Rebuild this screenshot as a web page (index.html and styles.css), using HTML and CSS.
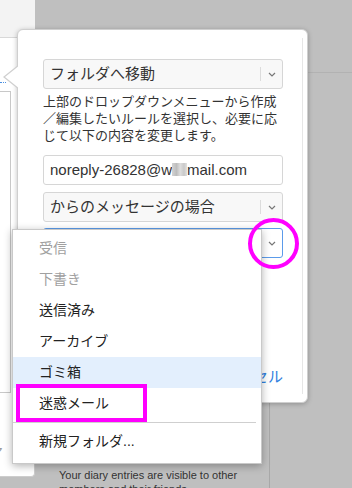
FILE: index.html
```html
<!DOCTYPE html>
<html lang="ja">
<head>
  <meta charset="UTF-8">
  <meta name="viewport" content="width=device-width, initial-scale=1.0">
  <title>フィルタ設定</title>
  <link rel="stylesheet" href="styles.css">
</head>
<body>
  <div class="page">
    <aside class="side">
      <div class="side-top"></div>
      <div class="side-card">
        <div class="side-dots"></div>
        <div class="side-box"></div>
        <div class="side-label">ア</div>
      </div>
    </aside>
    <main class="main">
      <div class="main-head"></div>
      <div class="main-body">
        <div class="diary">
          <div class="diary-line"></div>
          <p class="diary-note">Your diary entries are visible to other<br>members and their friends.</p>
        </div>
      </div>
    </main>
  </div>

  <div class="popup">
    <div class="popup-body">
      <div class="select">
        <span class="select-text">フォルダへ移動</span>
        <span class="select-arrow"><svg width="8" height="5" viewBox="0 0 8 5"><polyline points="1,1 4,4 7,1" fill="none" stroke="#777" stroke-width="1.2"/></svg></span>
      </div>
      <p class="hint">上部のドロップダウンメニューから作成<br>／編集したいルールを選択し、必要に応<br>じて以下の内容を変更します。</p>
      <div class="field">noreply-26828@w<span class="blur"></span>mail.com</div>
      <div class="select select-gap">
        <span class="select-text">からのメッセージの場合</span>
        <span class="select-arrow"><svg width="8" height="5" viewBox="0 0 8 5"><polyline points="1,1 4,4 7,1" fill="none" stroke="#777" stroke-width="1.2"/></svg></span>
      </div>
      <div class="select select-focus">
        <span class="select-text"></span>
        <span class="select-arrow"><svg width="8" height="5" viewBox="0 0 8 5"><polyline points="1,1 4,4 7,1" fill="none" stroke="#777" stroke-width="1.2"/></svg></span>
      </div>
      <div class="actions">
        <button class="btn-link">キャンセル</button>
      </div>
    </div>
  </div>

  <ul class="menu">
    <li class="menu-item is-disabled">受信</li>
    <li class="menu-item is-disabled">下書き</li>
    <li class="menu-item">送信済み</li>
    <li class="menu-item">アーカイブ</li>
    <li class="menu-item is-hover">ゴミ箱</li>
    <li class="menu-item">迷惑メール</li>
    <li class="menu-divider"></li>
    <li class="menu-item">新規フォルダ...</li>
  </ul>

  <div class="mark mark-circle"></div>
  <div class="mark mark-box"></div>
</body>
</html>
```

FILE: styles.css
```css
body {
  margin: 0;
  width: 352px;
  height: 488px;
  overflow: hidden;
  position: relative;
  background-color: #bfbfbf;
  font-family: "Liberation Sans", "Noto Sans CJK JP", sans-serif;
  color: #333;
}

/* underlying page */
.page {
  display: grid;
  grid-template-columns: 35px 1fr;
  height: 488px;
}
.side-top {
  height: 37px;
  background-color: #f3f3f3;
  border-bottom: 1px solid #d8d8d8;
}
.side-card {
  height: 439px;
  background: #fff;
  border-right: 1px solid #cdcdcd;
  border-bottom: 1px solid #cdcdcd;
  border-bottom-right-radius: 4px;
  box-sizing: border-box;
  overflow: hidden;
}
.side-dots {
  margin-top: 44px;
  width: 6px;
  border-top: 1px dotted #4a90e2;
}
.side-box {
  margin-top: 8px;
  margin-left: -1px;
  width: 12px;
  height: 302px;
  border: 1px solid #c8c8c8;
  box-sizing: border-box;
}
.side-label {
  margin-top: 52px;
  margin-left: -11px;
  font-size: 14px;
  line-height: 16px;
  color: #9a9a9a;
}
.main-head {
  height: 72px;
  border-bottom: 1px solid #b2b2b2;
}
.diary {
  width: 235px;
  height: 415px;
  border-right: 1px solid #a8a8a8;
  padding-top: 389px;
  box-sizing: border-box;
}
.diary-line {
  margin-left: 67px;
  width: 124px;
  height: 2px;
  background-color: #1c3d6e;
}
.diary-note {
  margin: 4px 0 0;
  padding-left: 24px;
  font-size: 11px;
  line-height: 14px;
  color: #333;
  white-space: nowrap;
}

/* popup */
.popup {
  position: absolute;
  left: 17px;
  top: 29px;
  width: 291px;
  height: 374px;
  box-sizing: border-box;
  background: #fff;
  border: 1px solid #cfcfcf;
  border-radius: 6px;
  box-shadow: 0 1px 5px rgba(0, 0, 0, 0.25);
  padding: 8px 4px 8px 0;
  z-index: 2;
}
.popup::before,
.popup::after {
  content: "";
  position: absolute;
  top: 35px;
  width: 0;
  height: 0;
  border-top: 12px solid transparent;
  border-bottom: 12px solid transparent;
}
.popup::before {
  left: -15px;
  border-right: 15px solid #cfcfcf;
}
.popup::after {
  left: -13px;
  border-right: 15px solid #fff;
}
.popup-body {
  height: 100%;
  box-sizing: border-box;
  border-right: 1px solid #e6e6e6;
  padding: 21px 19px 7px 25px;
  display: flex;
  flex-direction: column;
}
.select {
  display: flex;
  height: 30px;
  box-sizing: border-box;
  border: 1px solid #d6d6d6;
  border-radius: 3px;
  background-color: #f8f8f8;
}
.select-text {
  flex: 1;
  padding-left: 6px;
  font-size: 15px;
  line-height: 28px;
  white-space: nowrap;
}
.select-arrow {
  width: 21px;
  margin: 7px 0;
  border-left: 1px solid #dcdcdc;
  display: flex;
  align-items: center;
  justify-content: center;
}
.select-gap {
  margin-top: 7px;
}
.select-focus {
  margin-top: 6px;
  border-color: #5b9bea;
  background: #fff;
}
.hint {
  margin: 4px 0 0;
  font-size: 13px;
  line-height: 17px;
  color: #333;
  white-space: nowrap;
}
.field {
  margin-top: 11px;
  height: 30px;
  box-sizing: border-box;
  border: 1px solid #d6d6d6;
  border-radius: 3px;
  padding-left: 6px;
  font-size: 15px;
  line-height: 28px;
  white-space: nowrap;
}
.blur {
  display: inline-block;
  width: 15px;
  height: 13px;
  vertical-align: -1px;
  background: linear-gradient(90deg, #d4d4d4 0, #bdbdbd 30%, #dedede 55%, #c9c9c9 80%, #e2e2e2 100%);
}
.actions {
  margin-top: auto;
  display: flex;
  justify-content: flex-end;
}
.btn-link {
  border: none;
  background: none;
  padding: 0;
  font-family: inherit;
  font-size: 15px;
  line-height: 20px;
  color: #2f80e0;
}

/* dropdown menu */
.menu {
  position: absolute;
  left: 12px;
  top: 229px;
  width: 250px;
  box-sizing: border-box;
  margin: 0;
  padding: 3px 0 6px;
  list-style: none;
  background: #fff;
  border: 1px solid #c9c9c9;
  box-shadow: 0 2px 8px rgba(0, 0, 0, 0.3);
  z-index: 3;
}
.menu-item {
  height: 31px;
  line-height: 31px;
  padding-left: 26px;
  font-size: 14px;
  color: #222;
}
.menu-item.is-disabled {
  color: #a0a0a0;
}
.menu-item.is-hover {
  background-color: #e3effd;
}
.menu-divider {
  height: 1px;
  margin: 3px 5px 3px 0;
  background-color: #cfcfcf;
}

/* annotations */
.mark {
  position: absolute;
  box-sizing: border-box;
  border: 4px solid #ff00ff;
  z-index: 4;
}
.mark-circle {
  left: 248px;
  top: 218px;
  width: 51px;
  height: 51px;
  border-radius: 50%;
}
.mark-box {
  left: 16px;
  top: 384px;
  width: 131px;
  height: 38px;
}
```
